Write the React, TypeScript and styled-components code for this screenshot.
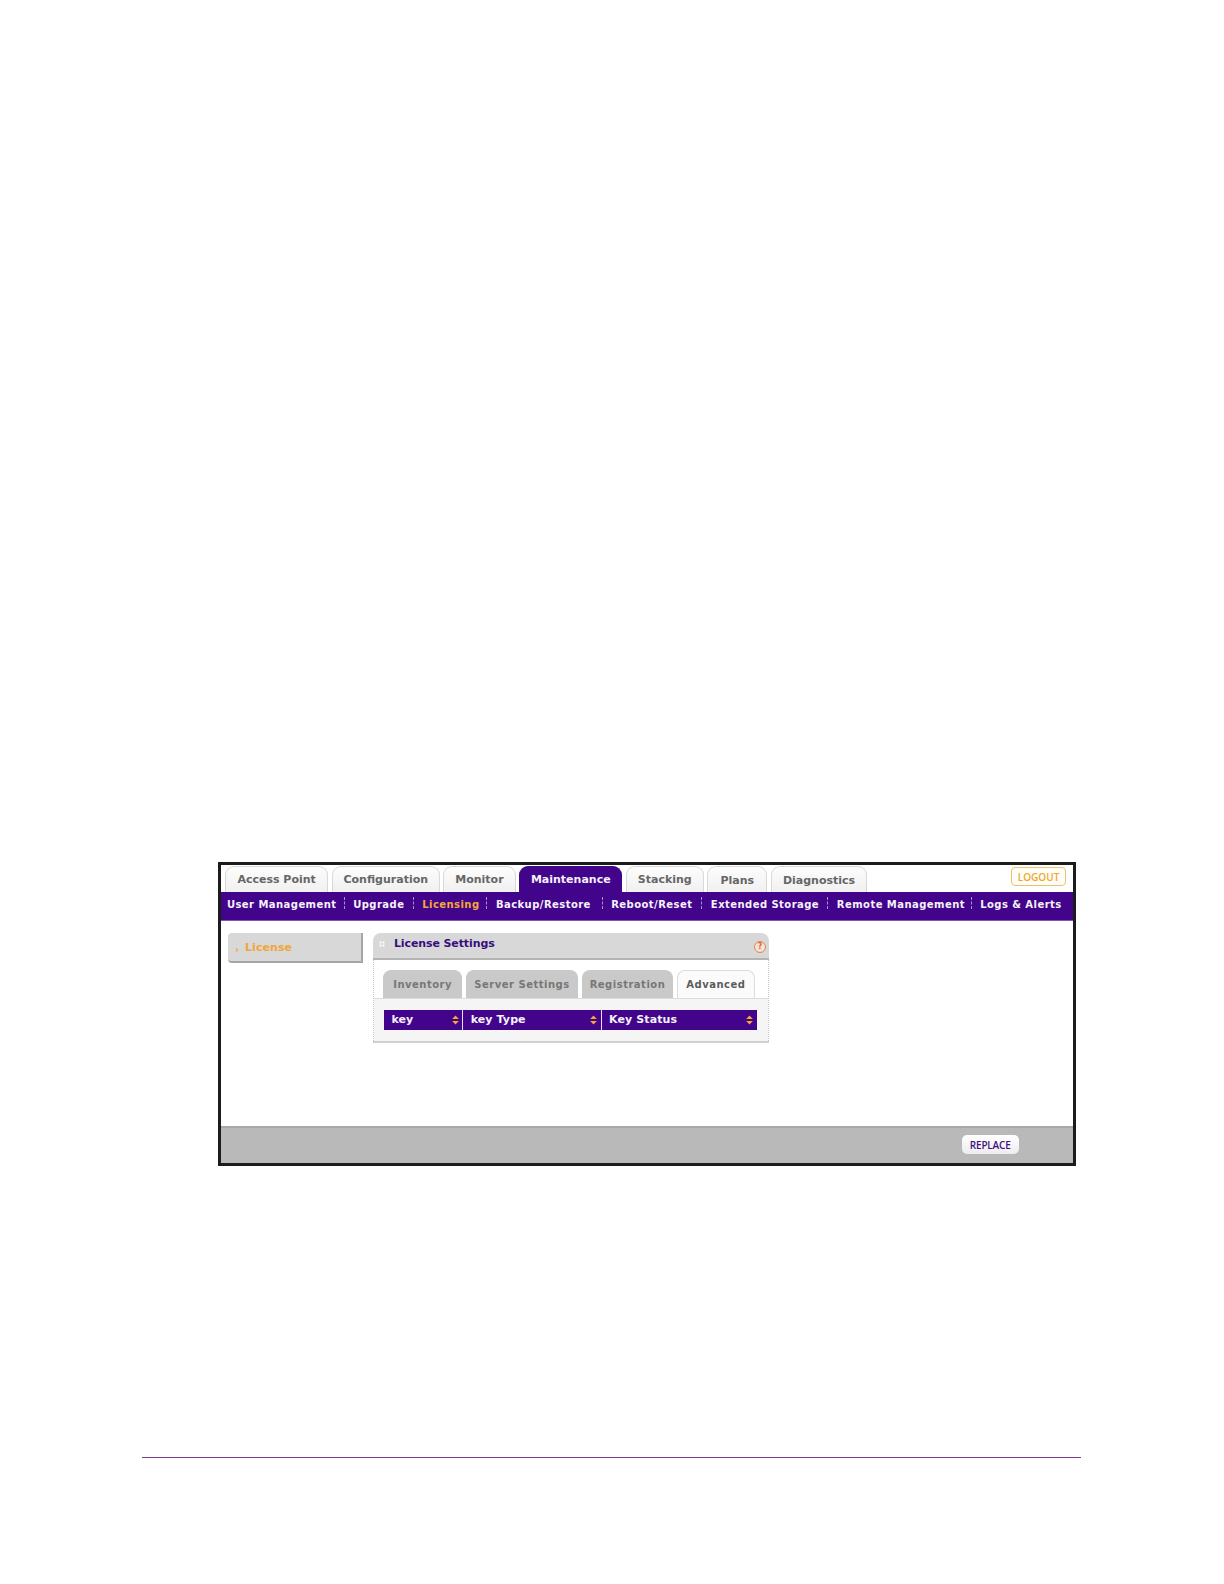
import React from "react";
import styled, { createGlobalStyle } from "styled-components";

const GlobalStyle = createGlobalStyle`
  html, body {
    margin: 0;
    padding: 0;
    background: #fff;
    font-family: "DejaVu Sans", Verdana, sans-serif;
  }
`;

const Page = styled.div`
  width: 1224px;
  height: 1584px;
  padding-top: 861.7px;
  box-sizing: border-box;
  overflow: hidden;
`;

const Frame = styled.div`
  width: 857.4px;
  height: 304.6px;
  margin-left: 218.3px;
  border: 3px solid #1c1c1c;
  box-sizing: border-box;
  display: flex;
  flex-direction: column;
  background: #fff;
`;

const TopRow = styled.div`
  height: 27px;
  flex: none;
  display: flex;
  align-items: flex-end;
  gap: 3.5px;
  padding-left: 3.6px;
  padding-right: 7px;
`;

const TopTab = styled.div<{ $w: number; $active?: boolean; $low?: boolean }>`
  width: ${(p) => p.$w}px;
  height: 25.8px;
  box-sizing: border-box;
  border: 1px solid ${(p) => (p.$active ? "#42048a" : "#d8d8d8")};
  border-bottom: none;
  border-radius: 9px 9px 0 0;
  background: ${(p) => (p.$active ? "#42048a" : "linear-gradient(#fdfdfd, #f0f0f0)")};
  color: ${(p) => (p.$active ? "#f4f0fa" : "#666")};
  font-size: 11px;
  font-weight: 700;
  line-height: ${(p) => (p.$low ? 28 : 25)}px;
  text-align: center;
  white-space: nowrap;
`;

const Logout = styled.div`
  margin-left: auto;
  align-self: flex-start;
  margin-top: 2.5px;
  width: 54.3px;
  height: 18.7px;
  box-sizing: border-box;
  border: 1px solid #f0c070;
  border-radius: 4px;
  background: #fffdf8;
  color: #eca82e;
  font-family: "Open Sans", sans-serif;
  font-size: 10px;
  font-weight: 600;
  line-height: 18px;
  text-align: center;
`;

const SubNav = styled.div`
  height: 29.6px;
  flex: none;
  background: #42048a;
  border-bottom: 1px solid #7a5aa8;
  box-sizing: border-box;
  display: flex;
  align-items: center;
  padding: 0 0 2px 5.6px;
`;

const SubLink = styled.div<{ $active?: boolean; $w: number }>`
  width: ${(p) => p.$w}px;
  flex: none;
  color: ${(p) => (p.$active ? "#f5a83a" : "#f6f2fb")};
  font-size: 10px;
  font-weight: 700;
  letter-spacing: 0.45px;
  white-space: nowrap;
`;

const SubSep = styled.span`
  width: 0;
  height: 12px;
  flex: none;
  margin: -3px 8.5px 0 8.5px;
  border-left: 1px dashed #a893c8;
`;

const Content = styled.div`
  flex: 1;
  display: flex;
  align-items: flex-start;
  padding: 11.6px 0 0 6.6px;
`;

const SideItem = styled.div`
  width: 135px;
  height: 29.8px;
  flex: none;
  box-sizing: border-box;
  background: #d8d8d8;
  border-right: 2px solid #a5a5a5;
  border-bottom: 2px solid #a5a5a5;
  border-radius: 4px 0 0 4px;
  display: flex;
  align-items: center;
  padding: 2px 0 0 7px;
  gap: 6px;
  color: #f0a63a;
  font-size: 11px;
  font-weight: 700;
  letter-spacing: 0.05px;
`;

const Chevron = styled.span`
  font-size: 10px;
  margin-top: 4px;
`;

const Panel = styled.div`
  width: 396.3px;
  height: 109.7px;
  flex: none;
  margin-left: 10px;
  display: flex;
  flex-direction: column;
  box-sizing: border-box;
  border-bottom: 2px solid #d0d0d0;
`;

const PanelHead = styled.div`
  height: 27px;
  flex: none;
  box-sizing: border-box;
  background: #d8d8d8;
  border-bottom: 2px solid #b4b4b4;
  border-radius: 8px 8px 0 0;
  display: flex;
  align-items: flex-start;
  padding: 4px 3px 0 6px;
`;

const Grip = styled.span`
  width: 6px;
  height: 6px;
  flex: none;
  margin: 4px 9px 0 0;
  background-image: radial-gradient(#f4f4f4 1px, transparent 1.2px);
  background-size: 3px 3px;
`;

const PanelTitle = styled.div`
  color: #35107c;
  font-size: 11px;
  font-weight: 700;
  letter-spacing: -0.1px;
  line-height: 14px;
`;

const Help = styled.span`
  margin-left: auto;
  margin-top: 4px;
  width: 12px;
  height: 12px;
  box-sizing: border-box;
  border: 1.5px solid #e5835a;
  border-radius: 50%;
  background: #f4e3d4;
  color: #d8663a;
  font-size: 8px;
  font-weight: 700;
  line-height: 9px;
  text-align: center;
`;

const PanelBody = styled.div`
  flex: 1;
  box-sizing: border-box;
  border-left: 1px dotted #c4c4c4;
  border-right: 1px dotted #c4c4c4;
  padding-top: 10px;
  display: flex;
  flex-direction: column;
`;

const InnerTabs = styled.div`
  height: 28px;
  flex: none;
  display: flex;
  align-items: flex-end;
  gap: 3.5px;
  padding-left: 9px;
`;

const InnerTab = styled.div<{ $w: number; $active?: boolean }>`
  width: ${(p) => p.$w}px;
  height: 28px;
  box-sizing: border-box;
  border-radius: 8px 8px 0 0;
  border: 1px solid ${(p) => (p.$active ? "#dcdcdc" : "#c9c9c9")};
  border-bottom: none;
  background: ${(p) => (p.$active ? "#fbfbfb" : "#c9c9c9")};
  color: ${(p) => (p.$active ? "#5c5c5c" : "#777")};
  font-size: 10px;
  font-weight: 700;
  letter-spacing: 0.5px;
  line-height: 27px;
  text-align: center;
  white-space: nowrap;
`;

const TableWrap = styled.div`
  flex: 1;
  background: #f5f5f5;
  border-top: 1px solid #dcdcdc;
  padding: 11.1px 0 0 10px;
`;

const TableHead = styled.div`
  height: 20px;
  width: 372.7px;
  display: flex;
  background: #42048a;
`;

const HeadCell = styled.div<{ $w: number }>`
  width: ${(p) => p.$w}px;
  height: 20px;
  flex: none;
  box-sizing: border-box;
  padding: 0 3.5px 0 7.5px;
  display: flex;
  align-items: center;
  justify-content: space-between;
  color: #f6f2fb;
  font-size: 11px;
  font-weight: 700;
  letter-spacing: 0.1px;
  border-right: 1px solid #e8e0f4;

  &:last-child {
    border-right: none;
  }
`;

const Footer = styled.div`
  height: 37.3px;
  flex: none;
  box-sizing: border-box;
  background: #b9b9b9;
  border-top: 2px solid #a8a8a8;
  display: flex;
  justify-content: flex-end;
  padding: 7px 54px 0 0;
`;

const ReplaceButton = styled.div`
  width: 57px;
  height: 19px;
  box-sizing: border-box;
  border-radius: 5px;
  background: linear-gradient(#ffffff, #ededed);
  color: #42107f;
  font-family: "Open Sans", sans-serif;
  font-size: 10px;
  font-weight: 600;
  letter-spacing: -0.2px;
  line-height: 20px;
  text-align: center;
`;

const Rule = styled.div`
  width: 939px;
  height: 1px;
  margin: 291.2px 0 0 142px;
  background: #7e3a8c;
`;

const SortIcon = () => (
  <svg width="7" height="10" viewBox="0 0 7 10">
    <path d="M3.5 0.5 L6.8 4 H0.2 Z" fill="#f5a83a" />
    <path d="M3.5 9.5 L6.8 6 H0.2 Z" fill="#f5a83a" />
  </svg>
);

const topTabs = [
  { label: "Access Point", w: 103.5 },
  { label: "Configuration", w: 107.8 },
  { label: "Monitor", w: 72.5 },
  { label: "Maintenance", w: 103.2, active: true },
  { label: "Stacking", w: 77.8 },
  { label: "Plans", w: 60.2, low: true },
  { label: "Diagnostics", w: 96.3, low: true },
];

const subLinks = [
  { label: "User Management", w: 108.3 },
  { label: "Upgrade", w: 51 },
  { label: "Licensing", w: 55.7, active: true },
  { label: "Backup/Restore", w: 97.3 },
  { label: "Reboot/Reset", w: 81.7 },
  { label: "Extended Storage", w: 108 },
  { label: "Remote Management", w: 125.3 },
  { label: "Logs & Alerts", w: 81 },
];

const innerTabs = [
  { label: "Inventory", w: 79.5 },
  { label: "Server Settings", w: 112.2 },
  { label: "Registration", w: 91.8 },
  { label: "Advanced", w: 78, active: true },
];

const columns = [
  { label: "key", w: 79.3 },
  { label: "key Type", w: 138.4 },
  { label: "Key Status", w: 155 },
];

export default function App() {
  return (
    <Page>
      <GlobalStyle />
      <Frame>
        <TopRow>
          {topTabs.map((t) => (
            <TopTab key={t.label} $w={t.w} $active={t.active} $low={t.low}>
              {t.label}
            </TopTab>
          ))}
          <Logout>LOGOUT</Logout>
        </TopRow>
        <SubNav>
          {subLinks.map((l, i) => (
            <React.Fragment key={l.label}>
              {i > 0 && <SubSep />}
              <SubLink $w={l.w} $active={l.active}>
                {l.label}
              </SubLink>
            </React.Fragment>
          ))}
        </SubNav>
        <Content>
          <SideItem>
            <Chevron>›</Chevron>
            License
          </SideItem>
          <Panel>
            <PanelHead>
              <Grip />
              <PanelTitle>License Settings</PanelTitle>
              <Help>?</Help>
            </PanelHead>
            <PanelBody>
              <InnerTabs>
                {innerTabs.map((t) => (
                  <InnerTab key={t.label} $w={t.w} $active={t.active}>
                    {t.label}
                  </InnerTab>
                ))}
              </InnerTabs>
              <TableWrap>
                <TableHead>
                  {columns.map((c) => (
                    <HeadCell key={c.label} $w={c.w}>
                      {c.label}
                      <SortIcon />
                    </HeadCell>
                  ))}
                </TableHead>
              </TableWrap>
            </PanelBody>
          </Panel>
        </Content>
        <Footer>
          <ReplaceButton>REPLACE</ReplaceButton>
        </Footer>
      </Frame>
      <Rule />
    </Page>
  );
}
